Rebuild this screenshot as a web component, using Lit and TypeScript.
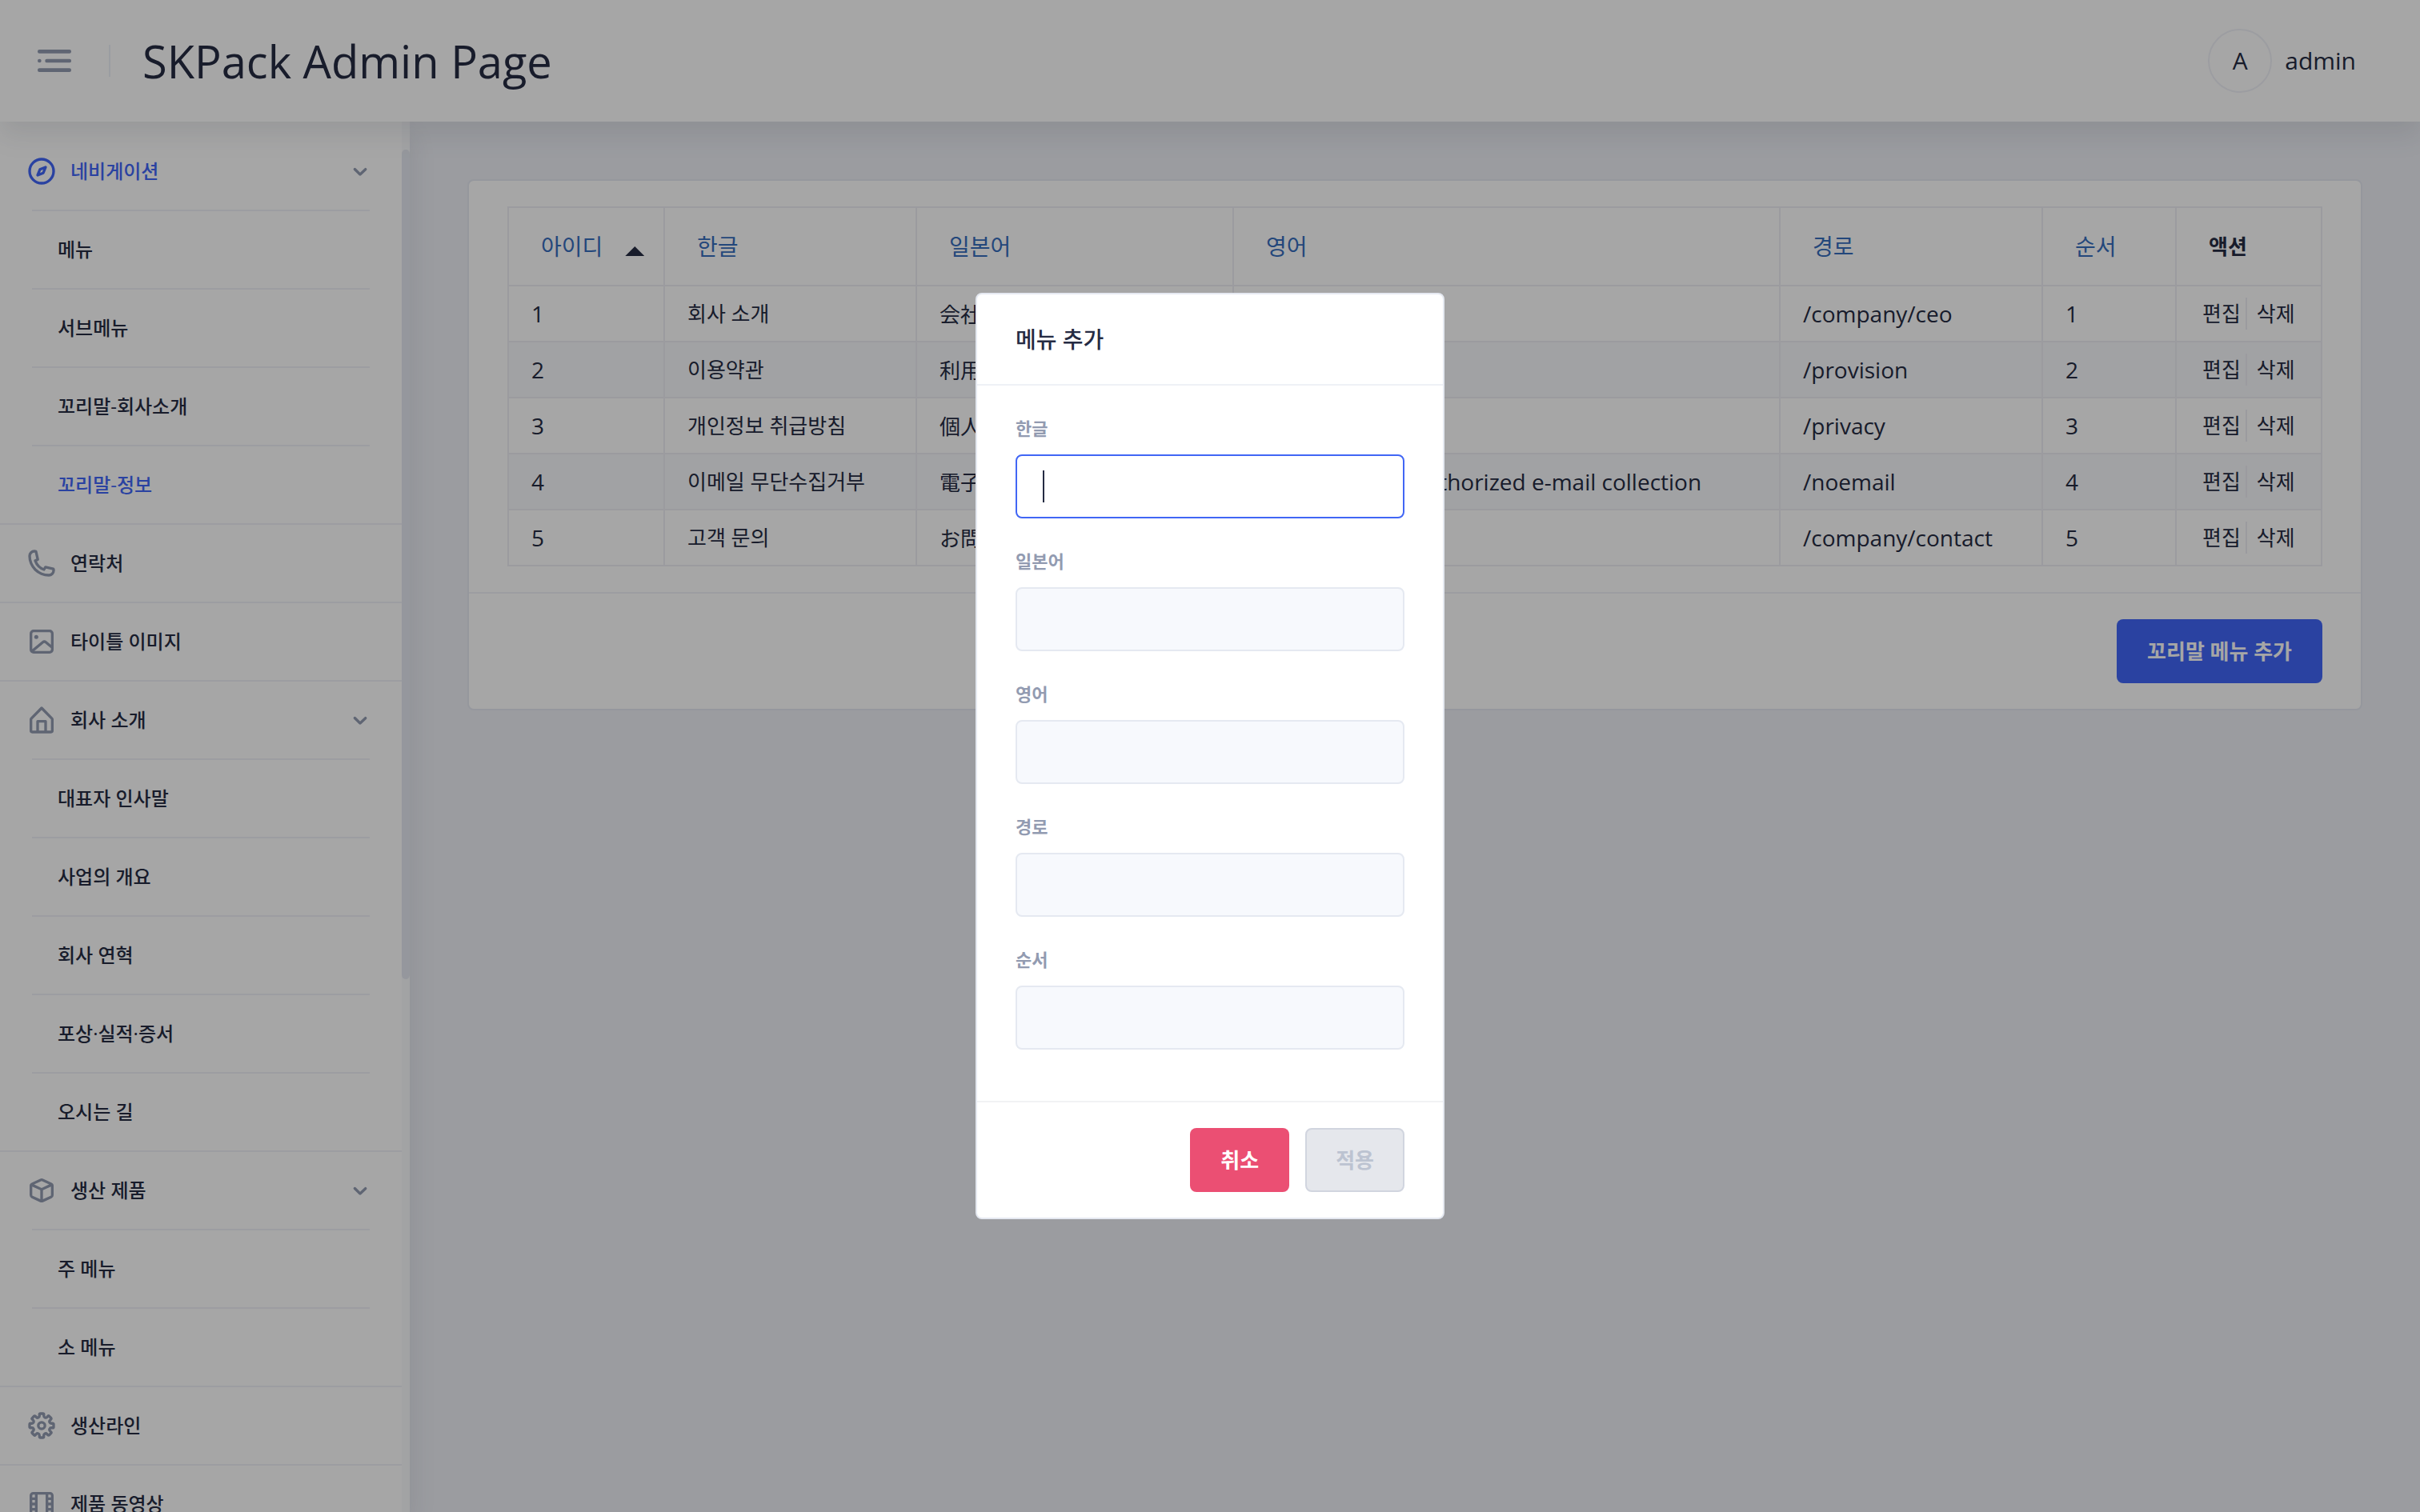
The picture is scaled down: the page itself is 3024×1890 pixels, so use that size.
import { LitElement, html, css, svg, nothing } from "lit";
import { customElement, property } from "lit/decorators.js";
import { classMap } from "lit/directives/class-map.js";

/* Outline icons on a 24-unit grid. */
const ICONS: Record<string, string[]> = {
  menu: [
    "M4 11a1 1 0 1 0 0 2 1 1 0 0 0 0-2z",
    "M7.94 11h12.12a.94.94 0 0 1 .94.94v.12a.94.94 0 0 1-.94.94H7.94a.94.94 0 0 1-.94-.94v-.12a.94.94 0 0 1 .94-.94z",
    "M3.94 16h16.12a.94.94 0 0 1 .94.94v.12a.94.94 0 0 1-.94.94H3.94a.94.94 0 0 1-.94-.94v-.12a.94.94 0 0 1 .94-.94z",
    "M3.94 6h16.12a.94.94 0 0 1 .94.94v.12a.94.94 0 0 1-.94.94H3.94A.94.94 0 0 1 3 7.06v-.12A.94.94 0 0 1 3.94 6z",
  ],
  chevron: [
    "M12 15.5a1 1 0 0 1-.71-.29l-4-4a1 1 0 1 1 1.42-1.42L12 13.1l3.3-3.18a1 1 0 1 1 1.38 1.44l-4 3.86a1 1 0 0 1-.68.28z",
  ],
  compass: [
    "M12 2a10 10 0 1 0 10 10A10 10 0 0 0 12 2zm0 18a8 8 0 1 1 8-8 8 8 0 0 1-8 8z",
    "M15.68 8.32a1 1 0 0 0-1.1-.25l-4.21 1.7a1 1 0 0 0-.55.55l-1.75 4.26a1 1 0 0 0 .18 1h.05A1 1 0 0 0 9 16a1 1 0 0 0 .38-.07l4.21-1.7a1 1 0 0 0 .55-.55l1.75-4.26a1 1 0 0 0-.21-1.1zm-4.88 4.89l.71-1.74 1.69-.68-.71 1.74z",
  ],
  phone: [
    "M17.4 22A15.42 15.42 0 0 1 2 6.6 4.6 4.6 0 0 1 6.6 2a3.94 3.94 0 0 1 .77.07 3.79 3.79 0 0 1 .72.18 1 1 0 0 1 .65.75l1.37 6a1 1 0 0 1-.26.92c-.13.14-.14.15-1.37.79a9.91 9.91 0 0 0 4.87 4.89c.65-1.24.66-1.25.8-1.38a1 1 0 0 1 .92-.26l6 1.37a1 1 0 0 1 .72.65 4.34 4.34 0 0 1 .19.73 4.77 4.77 0 0 1 .06.76A4.6 4.6 0 0 1 17.4 22zM6.6 4A2.61 2.61 0 0 0 4 6.6 13.41 13.41 0 0 0 17.4 20a2.61 2.61 0 0 0 2.6-2.6v-.33L15.36 16l-.29.55c-.45.87-.78 1.5-1.62 1.16a11.85 11.85 0 0 1-7.18-7.21c-.36-.78.32-1.14 1.18-1.59L8 8.64 6.93 4z",
  ],
  image: [
    "M18 3H6a3 3 0 0 0-3 3v12a3 3 0 0 0 3 3h12a3 3 0 0 0 3-3V6a3 3 0 0 0-3-3zM6 5h12a1 1 0 0 1 1 1v8.36l-3.2-2.73a2.77 2.77 0 0 0-3.52 0L5 17.7V6a1 1 0 0 1 1-1zm12 14H6.56l7-5.84a.78.78 0 0 1 .93 0L19 17v1a1 1 0 0 1-1 1z",
    "M8 7a1.5 1.5 0 1 0 0 3 1.5 1.5 0 0 0 0-3z",
  ],
  home: [
    "M20.42 10.18L12.71 2.3a1 1 0 0 0-1.42 0l-7.71 7.89A2 2 0 0 0 3 11.62V20a2 2 0 0 0 1.89 2h14.22A2 2 0 0 0 21 20v-8.38a2.07 2.07 0 0 0-.58-1.44zM10 20v-6h4v6zm9 0h-3v-7a1 1 0 0 0-1-1H9a1 1 0 0 0-1 1v7H5v-8.42l7-7.15 7 7.19z",
  ],
  cube: [
    "M20.66 7.26c0-.07-.1-.14-.15-.21l-.09-.1a2.5 2.5 0 0 0-.86-.68l-6.4-3a2.7 2.7 0 0 0-2.26 0l-6.4 3a2.6 2.6 0 0 0-.86.68L3.52 7a1 1 0 0 0-.15.2A2.39 2.39 0 0 0 3 8.46v7.06a2.49 2.49 0 0 0 1.46 2.26l6.4 3a2.7 2.7 0 0 0 2.27 0l6.4-3A2.49 2.49 0 0 0 21 15.54V8.46a2.39 2.39 0 0 0-.34-1.2zm-8.95-2.2a.73.73 0 0 1 .58 0l5.33 2.48L12 10.15 6.38 7.54zM5.3 16a.47.47 0 0 1-.3-.43V9.1l6 2.79v6.72zm13.39 0L13 18.61v-6.72l6-2.79v6.44a.48.48 0 0 1-.31.46z",
  ],
  gear: [
    "M12.94 22h-1.89a1.68 1.68 0 0 1-1.68-1.68v-1.09a.34.34 0 0 0-.22-.29.38.38 0 0 0-.41 0l-.74.8a1.67 1.67 0 0 1-2.37 0L4.26 18.4a1.66 1.66 0 0 1-.5-1.19 1.72 1.72 0 0 1 .5-1.21l.74-.74a.34.34 0 0 0 0-.37c-.06-.15-.16-.26-.3-.26H3.68A1.69 1.69 0 0 1 2 12.94v-1.89a1.68 1.68 0 0 1 1.68-1.68h1.09a.34.34 0 0 0 .29-.22.38.38 0 0 0 0-.41L4.26 8a1.67 1.67 0 0 1 0-2.37L5.6 4.26a1.65 1.65 0 0 1 1.18-.5 1.72 1.72 0 0 1 1.22.5l.74.74a.34.34 0 0 0 .37 0c.15-.06.26-.16.26-.3V3.68A1.69 1.69 0 0 1 11.06 2H13a1.68 1.68 0 0 1 1.68 1.68v1.09a.34.34 0 0 0 .22.29.38.38 0 0 0 .41 0l.69-.8a1.67 1.67 0 0 1 2.37 0l1.37 1.34a1.67 1.67 0 0 1 .5 1.19 1.63 1.63 0 0 1-.5 1.18l-.74.74a.34.34 0 0 0 0 .37c.06.15.16.26.3.26h1.09A1.69 1.69 0 0 1 22 11.06V13a1.68 1.68 0 0 1-1.68 1.68h-1.09a.34.34 0 0 0-.29.22.34.34 0 0 0 0 .37l.77.77a1.67 1.67 0 0 1 0 2.37l-1.31 1.33a1.65 1.65 0 0 1-1.18.5 1.72 1.72 0 0 1-1.19-.5l-.77-.74a.34.34 0 0 0-.37 0c-.15.06-.26.16-.26.3v1.09A1.69 1.69 0 0 1 12.94 22zm-1.57-2h1.26v-.77a2.33 2.33 0 0 1 1.46-2.14 2.36 2.36 0 0 1 2.59.47l.54.54.88-.88-.54-.55a2.34 2.34 0 0 1-.48-2.56 2.33 2.33 0 0 1 2.14-1.45H20v-1.29h-.77a2.33 2.33 0 0 1-2.14-1.46 2.36 2.36 0 0 1 .47-2.59l.54-.54-.88-.88-.55.54a2.39 2.39 0 0 1-4-1.67V4h-1.3v.77a2.33 2.33 0 0 1-1.46 2.14 2.36 2.36 0 0 1-2.59-.47l-.54-.54-.88.88.54.55a2.39 2.39 0 0 1-1.67 4H4v1.26h.77a2.33 2.33 0 0 1 2.14 1.46 2.36 2.36 0 0 1-.47 2.59l-.54.54.88.88.55-.54a2.39 2.39 0 0 1 4 1.67z",
    "M12 15.5a3.5 3.5 0 1 1 3.5-3.5 3.5 3.5 0 0 1-3.5 3.5zm0-5a1.5 1.5 0 1 0 1.5 1.5 1.5 1.5 0 0 0-1.5-1.5z",
  ],
  film: [
    "M18.26 3H5.74A2.74 2.74 0 0 0 3 5.74v12.52A2.74 2.74 0 0 0 5.74 21h12.52A2.74 2.74 0 0 0 21 18.26V5.74A2.74 2.74 0 0 0 18.26 3zM7 11H5V9h2zm-2 2h2v2H5zm4-8h6v14H9zm10 6h-2V9h2zm-2 2h2v2h-2zm2-7.26V7h-2V5h1.26a.74.74 0 0 1 .74.74zM5.74 5H7v2H5V5.74A.74.74 0 0 1 5.74 5zM5 18.26V17h2v2H5.74a.74.74 0 0 1-.74-.74zm14 0a.74.74 0 0 1-.74.74H17v-2h2z",
  ],
};

const icon = (name: string) => html`<svg class="icon" viewBox="0 0 24 24" fill="currentColor" aria-hidden="true">
  ${ICONS[name].map((d) => svg`<path d=${d}></path>`)}
</svg>`;

interface MenuEntry {
  title: string;
  icon: string;
  active?: boolean;
  children?: { title: string; active?: boolean }[];
}

const MENU: MenuEntry[] = [
  {
    title: "네비게이션",
    icon: "compass",
    active: true,
    children: [
      { title: "메뉴" },
      { title: "서브메뉴" },
      { title: "꼬리말-회사소개" },
      { title: "꼬리말-정보", active: true },
    ],
  },
  { title: "연락처", icon: "phone" },
  { title: "타이틀 이미지", icon: "image" },
  {
    title: "회사 소개",
    icon: "home",
    children: [
      { title: "대표자 인사말" },
      { title: "사업의 개요" },
      { title: "회사 연혁" },
      { title: "포상·실적·증서" },
      { title: "오시는 길" },
    ],
  },
  { title: "생산 제품", icon: "cube", children: [{ title: "주 메뉴" }, { title: "소 메뉴" }] },
  { title: "생산라인", icon: "gear" },
  { title: "제품 동영상", icon: "film" },
];

const ROWS = [
  { id: 1, ko: "회사 소개", ja: "会社紹介", en: "Company", path: "/company/ceo", order: 1 },
  { id: 2, ko: "이용약관", ja: "利用規約", en: "Provision", path: "/provision", order: 2 },
  { id: 3, ko: "개인정보 취급방침", ja: "個人情報取扱方針", en: "Privacy", path: "/privacy", order: 3 },
  { id: 4, ko: "이메일 무단수집거부", ja: "電子メール無断収集拒否", en: "Rejection of unauthorized e-mail collection", path: "/noemail", order: 4 },
  { id: 5, ko: "고객 문의", ja: "お問い合わせ", en: "Contact", path: "/company/contact", order: 5 },
];

const shared = css`
  * {
    box-sizing: border-box;
  }
  :host {
    font-family: "Open Sans", "Noto Sans CJK KR", sans-serif;
    color: #252b43;
  }
  a {
    color: inherit;
    text-decoration: none;
  }
  button {
    font-family: inherit;
    cursor: pointer;
  }
  .icon {
    display: block;
    width: 40px;
    height: 40px;
    flex: none;
  }
  .btn {
    height: 80px;
    padding: 0 38px;
    border: 0;
    border-radius: 8px;
    font-size: 26px;
    font-weight: 700;
    line-height: 32px;
    color: #ffffff;
  }
  .btn.primary {
    background: #4166f8;
  }
  .btn.danger {
    background: #eb4f73;
  }
  .btn:disabled {
    padding: 0 36px;
    border: 2px solid #d1d5df;
    background: #e5e7ec;
    color: #bcc3d1;
    cursor: default;
  }
`;

@customElement("app-header")
export class AppHeader extends LitElement {
  static styles = [
    shared,
    css`
      :host {
        display: flex;
        align-items: center;
        height: 152px;
        padding: 0 80px 0 40px;
        background: #ffffff;
        box-shadow: 0 16px 32px 0 rgba(44, 51, 73, 0.1);
      }
      .toggle {
        padding: 0;
        border: 0;
        background: none;
        color: #929bb1;
      }
      .toggle .icon {
        width: 56px;
        height: 56px;
      }
      .logo {
        display: flex;
        align-items: center;
        margin-left: 40px;
        font-size: 56px;
        line-height: 80px;
        white-space: nowrap;
      }
      .logo::before {
        content: "";
        width: 2px;
        height: 40px;
        margin-right: 40px;
        background: #edf1f7;
      }
      .user {
        display: flex;
        align-items: center;
        gap: 16px;
        margin-left: auto;
        font-size: 30px;
        line-height: 40px;
      }
      .avatar {
        display: grid;
        place-items: center;
        width: 80px;
        height: 80px;
        border: 2px solid #f0f1f7;
        border-radius: 50%;
      }
    `,
  ];
  render() {
    return html`
      <button class="toggle" aria-label="메뉴">${icon("menu")}</button>
      <a class="logo" href="#">SKPack Admin Page</a>
      <div class="user"><span class="avatar">A</span><span>admin</span></div>
    `;
  }
}

@customElement("app-sidebar")
export class AppSidebar extends LitElement {
  static styles = [
    shared,
    css`
      :host {
        display: flex;
        min-height: 0;
        overflow: hidden;
        background: #ffffff;
      }
      nav {
        flex: 1;
        padding-top: 14px;
        overflow: hidden;
        font-size: 24px;
        font-weight: 500;
        line-height: 48px;
      }
      ul {
        margin: 0;
        padding: 0;
        list-style: none;
      }
      .group {
        border-bottom: 2px solid #f0f1f7;
      }
      .children {
        margin: 0 40px;
      }
      .child {
        border-top: 2px solid #f0f1f7;
      }
      .link {
        display: flex;
        align-items: center;
        gap: 16px;
        padding: 24px 32px;
      }
      .link .icon {
        color: #929bb1;
      }
      .title {
        flex: 1;
      }
      .active,
      .active .lead .icon {
        color: #4166f8;
      }
      .track {
        display: grid;
        grid-template-rows: 35fr 1037fr 666fr;
        width: 10px;
        background: #f9fafc;
      }
      .thumb {
        grid-row: 2;
        border-radius: 5px;
        background: #e5e9f1;
      }
    `,
  ];
  render() {
    return html`
      <nav>
        <ul>
          ${MENU.map(
            (entry) => html`<li class="group">
              <a class=${classMap({ link: true, active: !!entry.active })} href="#">
                <span class="lead">${icon(entry.icon)}</span>
                <span class="title">${entry.title}</span>
                ${entry.children ? icon("chevron") : nothing}
              </a>
              ${entry.children
                ? html`<ul class="children">
                    ${entry.children.map(
                      (child) => html`<li class="child">
                        <a class=${classMap({ link: true, active: !!child.active })} href="#">${child.title}</a>
                      </li>`
                    )}
                  </ul>`
                : nothing}
            </li>`
          )}
        </ul>
      </nav>
      <div class="track"><div class="thumb"></div></div>
    `;
  }
}

@customElement("menu-table")
export class MenuTable extends LitElement {
  static styles = [
    shared,
    css`
      :host {
        display: block;
        border: 2px solid #e5e9f1;
        border-radius: 8px;
        background: #ffffff;
      }
      .body {
        padding: 32px 48px;
      }
      .foot {
        display: flex;
        justify-content: flex-end;
        padding: 32px 48px;
        border-top: 2px solid #f0f1f7;
      }
      table {
        width: 100%;
        border-collapse: collapse;
        table-layout: fixed;
        font-size: 28px;
        line-height: 40px;
      }
      .c-id {
        width: 195px;
      }
      .c-ko {
        width: 315px;
      }
      .c-ja {
        width: 396px;
      }
      .c-path {
        width: 328px;
      }
      .c-order {
        width: 167px;
      }
      .c-action {
        width: 182px;
      }
      th,
      td {
        border: 2px solid #eeeff5;
        text-align: left;
        white-space: nowrap;
      }
      th {
        padding: 28px 0 28px 40px;
        font-size: 28px;
        font-weight: 400;
      }
      th a {
        color: #376dbe;
      }
      th.plain {
        font-size: 26px;
        font-weight: 700;
      }
      .sorted {
        display: flex;
        align-items: center;
        gap: 28px;
      }
      .arrow {
        width: 24px;
        height: 12px;
        margin-top: 12px;
        background: currentColor;
        clip-path: polygon(50% 0, 100% 100%, 0 100%);
      }
      td {
        height: 70px;
        padding: 0 0 0 28px;
      }
      tbody tr:nth-child(even) {
        background: #f7f9fc;
      }
      td.ko,
      td.ja,
      td.actions {
        font-size: 26px;
      }
      td.ja {
        font-family: "Noto Sans CJK JP", sans-serif;
      }
      .pair {
        display: flex;
        padding-left: 4px;
      }
      .pair a + a {
        margin-left: 6px;
        padding-left: 12px;
        border-left: 2px solid #eeeff5;
      }
    `,
  ];
  render() {
    return html`
      <div class="body">
        <table>
          <colgroup>
            <col class="c-id" />
            <col class="c-ko" />
            <col class="c-ja" />
            <col />
            <col class="c-path" />
            <col class="c-order" />
            <col class="c-action" />
          </colgroup>
          <thead>
            <tr>
              <th><span class="sorted"><a href="#">아이디</a><span class="arrow"></span></span></th>
              <th><a href="#">한글</a></th>
              <th><a href="#">일본어</a></th>
              <th><a href="#">영어</a></th>
              <th><a href="#">경로</a></th>
              <th><a href="#">순서</a></th>
              <th class="plain">액션</th>
            </tr>
          </thead>
          <tbody>
            ${ROWS.map(
              (row) => html`<tr>
                <td>${row.id}</td>
                <td class="ko">${row.ko}</td>
                <td class="ja" lang="ja">${row.ja}</td>
                <td>${row.en}</td>
                <td>${row.path}</td>
                <td>${row.order}</td>
                <td class="actions"><div class="pair"><a href="#">편집</a><a href="#">삭제</a></div></td>
              </tr>`
            )}
          </tbody>
        </table>
      </div>
      <div class="foot"><button class="btn primary">꼬리말 메뉴 추가</button></div>
    `;
  }
}

@customElement("menu-dialog")
export class MenuDialog extends LitElement {
  @property({ attribute: false }) fields = ["한글", "일본어", "영어", "경로", "순서"];
  @property({ type: Number }) current = 0;

  static styles = [
    shared,
    css`
      :host {
        display: flex;
        align-items: center;
        justify-content: center;
        position: fixed;
        inset: 0;
        z-index: 10;
        background: rgba(0, 0, 0, 0.35);
      }
      .card {
        border: 2px solid #e5e9f1;
        border-radius: 8px;
        background: #ffffff;
      }
      h2 {
        margin: 0;
        padding: 32px 48px;
        border-bottom: 2px solid #eef1f6;
        font-size: 28px;
        font-weight: 500;
        line-height: 48px;
      }
      .fields {
        padding: 32px 48px;
      }
      .field {
        display: flex;
        flex-direction: column;
        margin-bottom: 32px;
      }
      label {
        margin-bottom: 12px;
        font-size: 22px;
        font-weight: 700;
        line-height: 42px;
        color: #929bb1;
      }
      input {
        width: 486px;
        height: 80px;
        padding: 0 32px;
        border: 2px solid #e5e9f1;
        border-radius: 8px;
        outline: none;
        background: #f7f9fd;
        color: inherit;
        font: inherit;
        font-size: 30px;
      }
      input.current {
        border-color: #4166f5;
        background: #ffffff linear-gradient(#252b43, #252b43) 32px center / 2px 40px no-repeat;
      }
      .foot {
        display: flex;
        justify-content: flex-end;
        gap: 20px;
        padding: 32px 48px;
        border-top: 2px solid #f1f2f4;
      }
    `,
  ];
  render() {
    return html`
      <form class="card" role="dialog" aria-labelledby="title">
        <h2 id="title">메뉴 추가</h2>
        <div class="fields">
          ${this.fields.map(
            (name, i) => html`<div class="field">
              <label for="field-${i}">${name}</label>
              <input id="field-${i}" type="text" class=${classMap({ current: i === this.current })} />
            </div>`
          )}
        </div>
        <div class="foot">
          <button class="btn danger" type="button">취소</button>
          <button class="btn" type="submit" disabled>적용</button>
        </div>
      </form>
    `;
  }
}

@customElement("app-root")
export class AppRoot extends LitElement {
  static styles = css`
    :host {
      display: grid;
      grid-template: auto minmax(0, 1fr) / 512px minmax(0, 1fr);
      height: 100vh;
      overflow: hidden;
      background: #eef0f6;
    }
    app-header {
      grid-column: 1 / -1;
      z-index: 2;
    }
    app-sidebar {
      z-index: 1;
      box-shadow: 0 16px 32px 0 rgba(44, 51, 73, 0.1);
    }
    main {
      padding: 72px;
    }
  `;
  render() {
    return html`
      <app-header></app-header>
      <app-sidebar></app-sidebar>
      <main><menu-table></menu-table></main>
      <menu-dialog></menu-dialog>
    `;
  }
}
